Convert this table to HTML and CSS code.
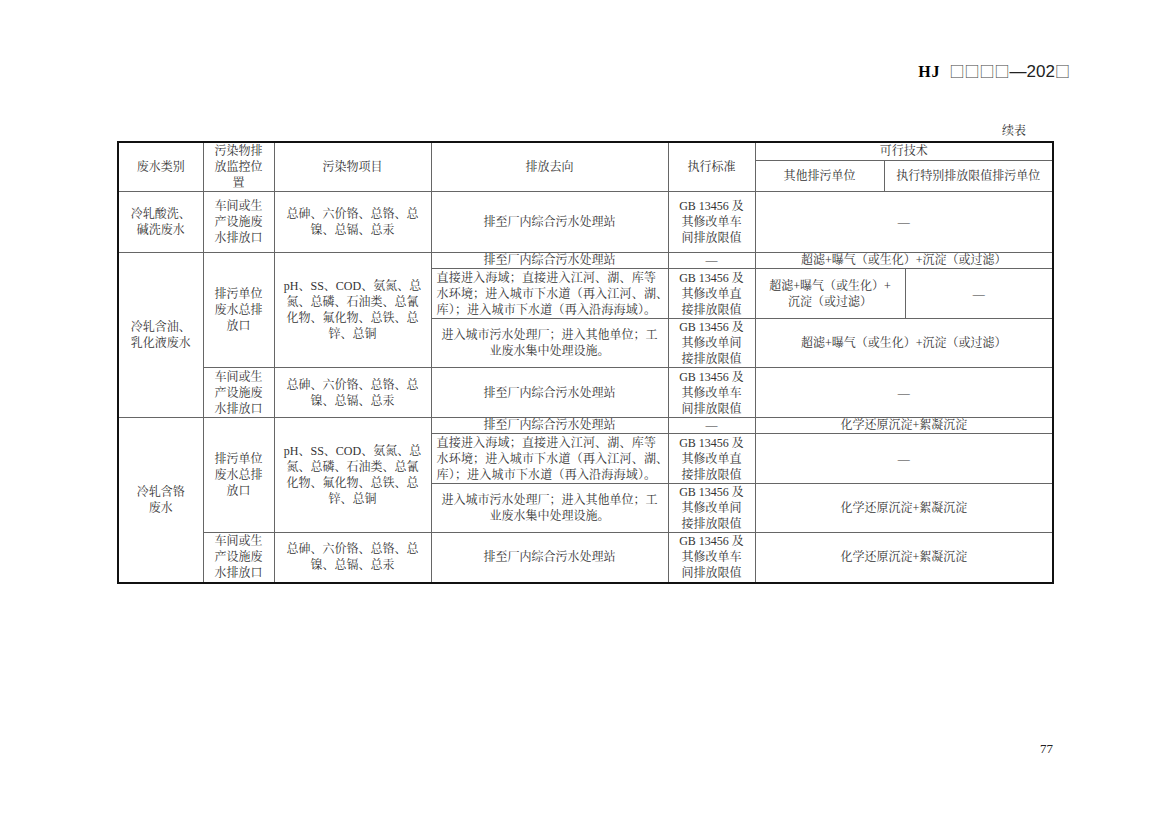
FILE: index.html
```html
<!DOCTYPE html>
<html lang="zh-CN">
<head>
<meta charset="utf-8">
<title>HJ 续表 77</title>
<link rel="stylesheet" href="styles.css">
</head>
<body>
<div class="page">
  <div class="running-head"><b class="hj">HJ</b><span class="box">□□□□</span><span class="num">—202</span><span class="box">□</span></div>
  <div class="caption">续表</div>
  <table class="grid">
    <colgroup>
      <col class="c1"><col class="c2"><col class="c3"><col class="c4"><col class="c5"><col class="c6"><col class="c7"><col class="c8">
    </colgroup>
    <tr class="h1">
      <td rowspan="2">废水类别</td>
      <td rowspan="2">污染物排<br>放监控位<br>置</td>
      <td rowspan="2">污染物项目</td>
      <td rowspan="2">排放去向</td>
      <td rowspan="2">执行标准</td>
      <td colspan="3">可行技术</td>
    </tr>
    <tr class="h2">
      <td>其他排污单位</td>
      <td colspan="2">执行特别排放限值排污单位</td>
    </tr>
    <tr class="ra">
      <td>冷轧酸洗、<br>碱洗废水</td>
      <td>车间或生<br>产设施废<br>水排放口</td>
      <td>总砷、六价铬、总铬、总<br>镍、总镉、总汞</td>
      <td>排至厂内综合污水处理站</td>
      <td>GB 13456 及<br>其修改单车<br>间排放限值</td>
      <td colspan="3">—</td>
    </tr>
    <tr class="rs">
      <td rowspan="4" class="grp">冷轧含油、<br>乳化液废水</td>
      <td rowspan="3">排污单位<br>废水总排<br>放口</td>
      <td rowspan="3">pH、SS、COD、氨氮、总<br>氮、总磷、石油类、总氰<br>化物、氟化物、总铁、总<br>锌、总铜</td>
      <td>排至厂内综合污水处理站</td>
      <td>—</td>
      <td colspan="3">超滤+曝气（或生化）+沉淀（或过滤）</td>
    </tr>
    <tr class="rb">
      <td class="left">直接进入海域；直接进入江河、湖、库等<br>水环境；进入城市下水道（再入江河、湖、<br>库）；进入城市下水道（再入沿海海域）。</td>
      <td>GB 13456 及<br>其修改单直<br>接排放限值</td>
      <td colspan="2">超滤+曝气（或生化）+<br>沉淀（或过滤）</td>
      <td>—</td>
    </tr>
    <tr class="rc">
      <td>进入城市污水处理厂；进入其他单位；工<br>业废水集中处理设施。</td>
      <td>GB 13456 及<br>其修改单间<br>接排放限值</td>
      <td colspan="3">超滤+曝气（或生化）+沉淀（或过滤）</td>
    </tr>
    <tr class="rb">
      <td>车间或生<br>产设施废<br>水排放口</td>
      <td>总砷、六价铬、总铬、总<br>镍、总镉、总汞</td>
      <td>排至厂内综合污水处理站</td>
      <td>GB 13456 及<br>其修改单车<br>间排放限值</td>
      <td colspan="3">—</td>
    </tr>
    <tr class="rs">
      <td rowspan="4" class="grp">冷轧含铬<br>废水</td>
      <td rowspan="3">排污单位<br>废水总排<br>放口</td>
      <td rowspan="3">pH、SS、COD、氨氮、总<br>氮、总磷、石油类、总氰<br>化物、氟化物、总铁、总<br>锌、总铜</td>
      <td>排至厂内综合污水处理站</td>
      <td>—</td>
      <td colspan="3">化学还原沉淀+絮凝沉淀</td>
    </tr>
    <tr class="rb">
      <td class="left">直接进入海域；直接进入江河、湖、库等<br>水环境；进入城市下水道（再入江河、湖、<br>库）；进入城市下水道（再入沿海海域）。</td>
      <td>GB 13456 及<br>其修改单直<br>接排放限值</td>
      <td colspan="3">—</td>
    </tr>
    <tr class="rc">
      <td>进入城市污水处理厂；进入其他单位；工<br>业废水集中处理设施。</td>
      <td>GB 13456 及<br>其修改单间<br>接排放限值</td>
      <td colspan="3">化学还原沉淀+絮凝沉淀</td>
    </tr>
    <tr class="rb">
      <td>车间或生<br>产设施废<br>水排放口</td>
      <td>总砷、六价铬、总铬、总<br>镍、总镉、总汞</td>
      <td>排至厂内综合污水处理站</td>
      <td>GB 13456 及<br>其修改单车<br>间排放限值</td>
      <td colspan="3">化学还原沉淀+絮凝沉淀</td>
    </tr>
  </table>
  <div class="folio">77</div>
</div>
</body>
</html>
```

FILE: styles.css
```css
html, body {
  margin: 0;
  padding: 0;
  background: #ffffff;
}

.page {
  width: 1169px;
  height: 826px;
  position: relative;
  font-family: "Liberation Serif", "Noto Serif CJK SC", "Noto Sans CJK SC", serif;
  color: #333333;
}

.running-head {
  padding-top: 60px;
  padding-right: 99px;
  height: 21px;
  text-align: right;
  font-size: 15px;
  line-height: 21px;
  color: #000;
}

.running-head .hj {
  font-family: "Liberation Serif", serif;
  font-weight: bold;
  font-size: 16px;
  letter-spacing: 1px;
  margin-right: 9px;
}

.running-head .box {
  font-family: "Noto Sans CJK SC", sans-serif;
  font-size: 15px;
  color: #444;
}

.running-head .num {
  font-family: "Liberation Sans", sans-serif;
  font-size: 17px;
  color: #222;
}

.caption {
  margin-top: 42px;
  padding-right: 143px;
  text-align: right;
  font-size: 12px;
  line-height: 16px;
  height: 16px;
}

.grid {
  margin-left: 117px;
  margin-top: 2px;
  border-collapse: collapse;
  table-layout: fixed;
  width: 935px;
  border: 2px solid #111;
  font-size: 12px;
  line-height: 16px;
}

.grid td {
  border: 1px solid #666;
  padding: 0 2px;
  text-align: center;
  vertical-align: middle;
  white-space: nowrap;
  overflow: hidden;
}

.grid td.left {
  text-align: left;
  padding-left: 5px;
  letter-spacing: 0.2px;
}

.c1 { width: 85px; }
.c2 { width: 71px; }
.c3 { width: 157px; }
.c4 { width: 237px; }
.c5 { width: 87px; }
.c6 { width: 129px; }
.c7 { width: 21px; }
.c8 { width: 148px; }

.h1 { height: 18px; }
.h1 td { line-height: 16px; }
.h2 { height: 31px; }
.ra { height: 61px; }
.rs { height: 15px; }
.rs td { line-height: 15px; }
.rs td[rowspan] { line-height: 16px; }
.rb { height: 50px; }
.rc { height: 49px; }

.folio {
  position: absolute;
  left: 1040px;
  top: 741px;
  font-size: 13px;
  line-height: 16px;
  color: #222;
}
```
